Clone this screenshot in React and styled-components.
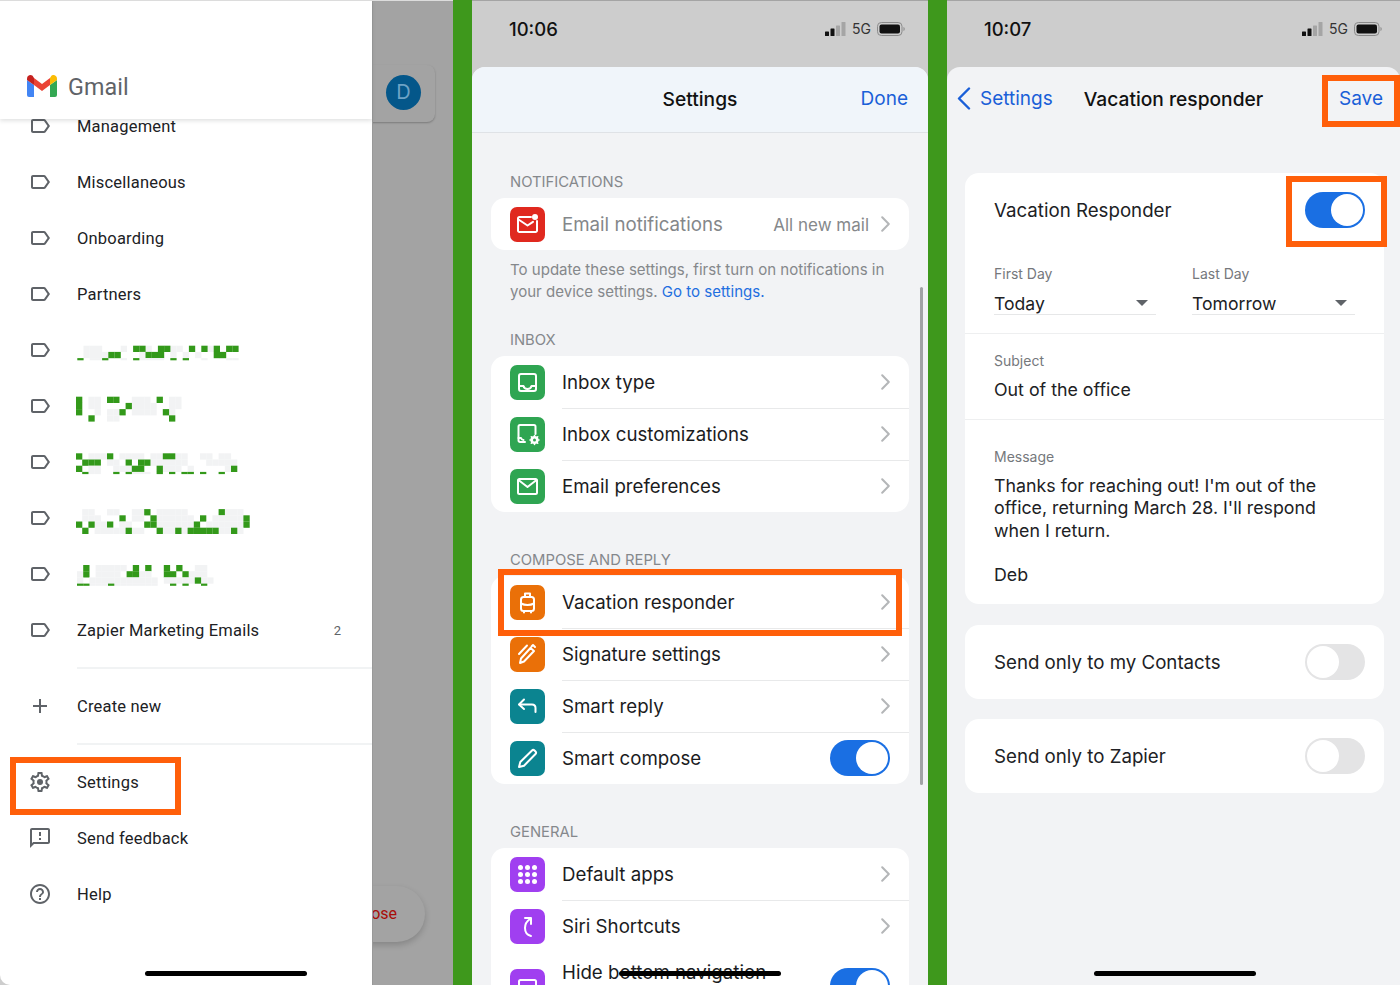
import React from 'react';
import styled, { createGlobalStyle } from 'styled-components';
import { MdOutlineLabel, MdAdd, MdOutlineFeedback, MdHelpOutline } from 'react-icons/md';

const GlobalStyle = createGlobalStyle`
    html, body {
        margin: 0;
        padding: 0;
        height: 985px;
        overflow: hidden;
        background: #3e981c;
    }
    * {
        box-sizing: border-box;
    }
`

const labels = ['Management', 'Miscellaneous', 'Onboarding', 'Partners']

// pixelated labels: each row is [green columns, pale columns], the last row is cut short
const redactions = [
    {
        y: 11.7,
        x: 1.3,
        rows: [
            [[9, 10, 13, 14, 18, 20, 22, 24, 25], [1, 2, 3, 7, 11, 15, 16, 21]],
            [[5, 6, 11, 12, 13, 22, 23], [1, 2, 3, 4, 10, 15, 17, 19]],
            [[0, 4, 9, 15, 17], [2, 3, 7, 10, 11, 12, 13, 20, 24, 25]],
        ],
    },
    {
        y: 6.7,
        x: 0,
        rows: [
            [[0, 5, 6, 13], [2, 3, 9, 10, 11, 15, 16]],
            [[0, 8], [2, 3, 9, 10, 11, 12, 15, 16]],
            [[0, 7, 14], [3, 5, 6, 9, 10, 11, 12, 15]],
            [[2, 15], [5, 6]],
            [[], []],
        ],
    },
    {
        y: 7.3,
        x: 0,
        rows: [
            [[0, 5, 14, 15], [2, 3, 4, 7, 8, 9, 10, 12, 13, 16, 17, 20, 21, 23, 24]],
            [[1, 2, 3, 8, 10, 11], [5, 6, 12, 13, 14, 15, 16, 17, 21, 22, 23, 24, 25]],
            [[0, 9, 10, 13, 25], [2, 3, 6, 7, 8, 14, 15, 16, 18, 24]],
            [[1, 6, 8, 13, 15, 17, 18, 20, 23], [2, 3, 9, 10, 11]],
        ],
    },
    {
        y: 7.1,
        x: 0,
        rows: [
            [[11, 23], [1, 2, 5, 6, 9, 10, 13, 14, 15, 16, 17, 24, 25, 26]],
            [[7, 12, 20, 27], [1, 2, 3, 9, 10, 13, 14, 15, 16, 17, 18, 22, 23, 24, 25, 26]],
            [[0, 2, 5, 11, 12, 19, 27], [3, 4, 7, 8, 13, 14, 15, 16, 17, 18, 21, 22, 23, 24, 25, 26]],
            [[1, 8, 13, 16, 18, 19, 20, 21, 22, 25], [3, 4, 5, 6, 7, 9, 10, 14, 15, 17, 23, 24, 26]],
            [[], [4, 5, 14, 15]],
        ],
    },
    {
        y: 7,
        x: 1,
        rows: [
            [[1, 9, 11, 14, 16], [3, 4, 5, 6, 7, 19, 20]],
            [[1, 8, 9, 14, 15, 17], [0, 3, 4, 5, 6, 10, 11, 18, 19, 20]],
            [[19], [0, 2, 3, 4, 5, 6, 7, 8, 9, 10, 11, 12, 14, 15, 16, 17, 18, 20, 21]],
            [[0, 1, 5, 15, 17, 20], [2, 3, 4, 6, 7, 8, 9, 10, 11, 12]],
        ],
    },
]

const Redaction = ({ y, x, rows }) => {
    const cell = (r, c, color) => (
        <rect
            key={`${r}-${c}-${color}`}
            x={x + c * 6.2}
            y={y + r * 6.2}
            width='6.3'
            height={r === rows.length - 1 ? 2.2 : 6.3}
            fill={color}
        />
    )
    return (
        <svg width='190' height='32' viewBox='0 0 190 32'>
            {rows.map(([green, pale], r) => [
                ...pale.map(c => cell(r, c, '#f2f3f4')),
                ...green.map(c => cell(r, c, '#33991a')),
            ])}
        </svg>
    )
}

const GmailLogo = () => (
    <svg width='30' height='22' viewBox='0 0 30 22'>
        <path fill='#4285f4' d='M2 22h5V10L0 5v15a2 2 0 0 0 2 2z' />
        <path fill='#34a853' d='M23 22h5a2 2 0 0 0 2-2V5l-7 5z' />
        <path fill='#fbbc04' d='M23 3v7l7-5V3.500c0-2.900-3.300-4.600-5.600-2.800z' />
        <path fill='#ea4335' d='M7 10V3l8 6 8-6v7l-8 6z' />
        <path fill='#c5221f' d='M0 5l7 5V3L5.600.7C3.300-1 0 .6 0 3.500z' />
    </svg>
)

const GearIcon = () => (
    <svg width='24' height='24' viewBox='0 0 24 24' fill='#5f6368'>
        <path d='M19.43 12.98c.04-.32.07-.64.07-.98 0-.34-.03-.66-.07-.98l2.11-1.65c.19-.15.24-.42.12-.64l-2-3.46c-.09-.16-.26-.25-.44-.25-.06 0-.12.01-.17.03l-2.49 1c-.52-.4-1.08-.73-1.69-.98l-.38-2.65C14.46 2.18 14.25 2 14 2h-4c-.25 0-.46.18-.49.42l-.38 2.65c-.61.25-1.17.59-1.69.98l-2.49-1c-.06-.02-.12-.03-.18-.03-.17 0-.34.09-.43.25l-2 3.46c-.13.22-.07.49.12.64l2.11 1.65c-.04.32-.07.65-.07.98 0 .33.03.66.07.98l-2.11 1.65c-.19.15-.24.42-.12.64l2 3.46c.09.16.26.25.44.25.06 0 .12-.01.17-.03l2.49-1c.52.4 1.08.73 1.69.98l.38 2.65c.03.24.24.42.49.42h4c.25 0 .46-.18.49-.42l.38-2.65c.61-.25 1.17-.59 1.69-.98l2.49 1c.06.02.12.03.18.03.17 0 .34-.09.43-.25l2-3.46c.12-.22.07-.49-.12-.64l-2.11-1.65zm-1.98-1.71c.04.31.05.52.05.73 0 .21-.02.43-.05.73l-.14 1.13.89.7 1.08.84-.7 1.21-1.27-.51-1.04-.42-.9.68c-.43.32-.84.56-1.25.73l-1.06.43-.16 1.13-.2 1.35h-1.4l-.19-1.35-.16-1.13-1.06-.43c-.43-.18-.83-.41-1.23-.71l-.91-.7-1.06.43-1.27.51-.7-1.21 1.08-.84.89-.7-.14-1.13c-.03-.31-.05-.54-.05-.74s.02-.43.05-.73l.14-1.13-.89-.7-1.08-.84.7-1.21 1.27.51 1.04.42.9-.68c.43-.32.84-.56 1.25-.73l1.06-.43.16-1.13.2-1.35h1.39l.19 1.35.16 1.13 1.06.43c.43.18.83.41 1.23.71l.91.7 1.06-.43 1.27-.51.7 1.21-1.07.85-.89.7.14 1.13z' />
        <circle cx='12' cy='12' r='3' />
    </svg>
)

const Chevron = () => (
    <svg width='9' height='16' viewBox='0 0 9 16' fill='none' stroke='#b4b6b8' strokeWidth='2' strokeLinecap='round' strokeLinejoin='round'>
        <path d='M1.200 1.200L7.800 8l-6.600 6.800' />
    </svg>
)

const tileStroke = {
    fill: 'none',
    stroke: '#fff',
    strokeWidth: 2,
    strokeLinecap: 'round',
    strokeLinejoin: 'round',
}

const tileIcons = {
    notify: (
        <>
            <path {...tileStroke} d='M21 10H9.500A1.500 1.500 0 0 0 8 11.500v12A1.500 1.500 0 0 0 9.500 25h16a1.500 1.500 0 0 0 1.500-1.500V14' />
            <path {...tileStroke} d='M8.500 12.500l9 6 5.500-3.700' />
            <circle cx='25' cy='10' r='3' fill='#fff' />
        </>
    ),
    inbox: (
        <>
            <rect {...tileStroke} x='9' y='9' width='17' height='17' rx='2' />
            <path {...tileStroke} d='M9 21h4.500c.5 2 2 3 4 3s3.500-1 4-3H26' />
        </>
    ),
    custom: (
        <>
            <path {...tileStroke} d='M15 25H10a1.500 1.500 0 0 1-1.500-1.500v-14A1.500 1.500 0 0 1 10 8h14a1.500 1.500 0 0 1 1.500 1.500V17' />
            <path {...tileStroke} d='M8.500 21h2.500c.4 1.400 1.300 2 2.500 2' />
            <circle cx='24.500' cy='23' r='2.800' fill='none' stroke='#fff' strokeWidth='2.600' />
            <path {...tileStroke} strokeWidth='1.600' d='M24.500 18.500v1.200M24.500 26.300v1.200M20 23h1.200M27.800 23H29M21.300 19.800l.9.9M26.800 25.300l.9.9M21.300 26.200l.9-.9M26.800 20.700l.9-.9' />
        </>
    ),
    mail: (
        <>
            <rect {...tileStroke} x='8' y='10' width='19' height='15' rx='1.500' />
            <path {...tileStroke} d='M8.500 11l9 7 9-7' />
        </>
    ),
    luggage: (
        <>
            <rect {...tileStroke} x='11' y='12' width='13' height='14' rx='2.500' />
            <path {...tileStroke} d='M15 12V8.500h5V12M11 18.500c2 1 3.500 1.500 6.500 1.500s4.500-.5 6.500-1.500M14 26.500v1M21 26.500v1' />
        </>
    ),
    pens: (
        <>
            <path {...tileStroke} d='M10 26l1-4.500 9.500-10.500 3.500 3-10 10.500zM17 8.500L9 17M25 10l-2-2-1.500 1.500' />
        </>
    ),
    reply: (
        <>
            <path {...tileStroke} d='M14 10.500L9 15.500l5 4.500' />
            <path {...tileStroke} d='M9.500 15.500H22c2.200 0 3.500 1.500 3.500 3.500v4' />
        </>
    ),
    pencil: (
        <>
            <path {...tileStroke} d='M9 26l1.300-5L22 9.500a1.800 1.800 0 0 1 2.500 0l1 1a1.800 1.800 0 0 1 0 2.500L14 24.700z' />
        </>
    ),
    apps: (
        <g fill='#fff'>
            {[10.500, 17.500, 24.500].map(cy => [10.500, 17.500, 24.500].map(cx => (
                <circle key={`${cx}-${cy}`} cx={cx} cy={cy} r='2.500' />
            )))}
        </g>
    ),
    siri: (
        <>
            <path {...tileStroke} d='M21 27c-4-1-6-4-6-8s2-7 5-9' />
            <path {...tileStroke} d='M15 9h6v6' />
        </>
    ),
    hide: (
        <>
            <rect {...tileStroke} x='9' y='11' width='17' height='17' rx='1.500' />
            <path {...tileStroke} d='M9 23h17' />
        </>
    ),
}

const TileIcon = ({ name, color }) => (
    <Tile $color={color}>
        <svg width='35' height='35' viewBox='0 0 35 35'>{tileIcons[name]}</svg>
    </Tile>
)

const StatusBar = ({ time, right }) => (
    <Status $right={right}>
        <Clock>{time}</Clock>
        <StatusIcons>
            <svg width='21' height='14' viewBox='0 0 21 14'>
                <rect x='0' y='9.500' width='4' height='4.500' rx='.6' fill='#111' />
                <rect x='5.500' y='6.500' width='4' height='7.500' rx='.6' fill='#111' />
                <rect x='11' y='3.500' width='4' height='10.500' rx='.6' fill='#a5a5a5' />
                <rect x='16.500' y='0' width='4' height='14' rx='.6' fill='#a5a5a5' />
            </svg>
            <Network>5G</Network>
            <svg width='28' height='14' viewBox='0 0 28 14'>
                <rect x='.5' y='.5' width='24.500' height='13' rx='3.800' fill='none' stroke='#8a8a8a' />
                <rect x='2.500' y='2.500' width='20.500' height='9' rx='2' fill='#111' />
                <path d='M26.500 5v4c.8-.4 1.200-1.200 1.200-2s-.4-1.600-1.200-2z' fill='#8a8a8a' />
            </svg>
        </StatusIcons>
    </Status>
)

const Row = ({ icon, color, title, faded, value, on, tall }) => (
    <SettingRow $tall={tall}>
        <TileIcon name={icon} color={color} />
        <RowBody>
            <RowTitle $faded={faded} $tall={tall}>{title}</RowTitle>
            {value && <RowValue>{value}</RowValue>}
            {on ? <Toggle $on /> : <Chevron />}
        </RowBody>
    </SettingRow>
)

const App = () => {
    return (
        <Page>
            <GlobalStyle />

            <Panel $width={453} $row>
                <Drawer>
                    <DrawerHeader>
                        <GmailLogo />
                        <GmailName>Gmail</GmailName>
                    </DrawerHeader>
                    <DrawerList>
                        {labels.map(label => (
                            <DrawerRow key={label}>
                                <DrawerIcon><MdOutlineLabel size={24} /></DrawerIcon>
                                <DrawerText>{label}</DrawerText>
                            </DrawerRow>
                        ))}
                        {redactions.map(r => (
                            <DrawerRow key={r.y}>
                                <DrawerIcon><MdOutlineLabel size={24} /></DrawerIcon>
                                <RedactionSlot><Redaction {...r} /></RedactionSlot>
                            </DrawerRow>
                        ))}
                        <DrawerRow>
                            <DrawerIcon><MdOutlineLabel size={24} /></DrawerIcon>
                            <DrawerText>Zapier Marketing Emails</DrawerText>
                            <DrawerCount>2</DrawerCount>
                        </DrawerRow>
                        <DrawerDivider />
                        <DrawerRow>
                            <DrawerIcon><MdAdd size={24} /></DrawerIcon>
                            <DrawerText>Create new</DrawerText>
                        </DrawerRow>
                        <DrawerDivider />
                        <DrawerRow>
                            <DrawerIcon><GearIcon /></DrawerIcon>
                            <DrawerText>Settings</DrawerText>
                        </DrawerRow>
                        <DrawerRow>
                            <DrawerIcon><MdOutlineFeedback size={24} /></DrawerIcon>
                            <DrawerText>Send feedback</DrawerText>
                        </DrawerRow>
                        <DrawerRow>
                            <DrawerIcon><MdHelpOutline size={24} /></DrawerIcon>
                            <DrawerText>Help</DrawerText>
                        </DrawerRow>
                    </DrawerList>
                </Drawer>
                <Dimmed>
                    <SearchBar>
                        <Avatar>D</Avatar>
                    </SearchBar>
                    <ComposePill>ose</ComposePill>
                </Dimmed>
                <Callout $top={757} $left={10} $width={171} $height={58} />
                <HomeBar $left={145} />
            </Panel>

            <Panel $width={456}>
                <StatusBar time='10:06' right={23} />
                <Sheet>
                    <SheetHeader $tinted>
                        <span />
                        <HeaderTitle>Settings</HeaderTitle>
                        <HeaderAction>Done</HeaderAction>
                    </SheetHeader>
                    <SettingsBody>
                        <SectionLabel $top={39}>Notifications</SectionLabel>
                        <Card>
                            <Row icon='notify' color='#e0291f' title='Email notifications' faded value='All new mail' />
                        </Card>
                        <Footnote>
                            To update these settings, first turn on notifications in<br />
                            your device settings. <FootLink>Go to settings.</FootLink>
                        </Footnote>

                        <SectionLabel $top={27}>Inbox</SectionLabel>
                        <Card>
                            <Row icon='inbox' color='#2fa552' title='Inbox type' />
                            <Row icon='custom' color='#2fa552' title='Inbox customizations' />
                            <Row icon='mail' color='#2fa552' title='Email preferences' />
                        </Card>

                        <SectionLabel $top={38}>Compose and reply</SectionLabel>
                        <Card>
                            <Row icon='luggage' color='#ea7008' title='Vacation responder' />
                            <Row icon='pens' color='#ea7008' title='Signature settings' />
                            <Row icon='reply' color='#0b8490' title='Smart reply' />
                            <Row icon='pencil' color='#0b8490' title='Smart compose' on />
                        </Card>

                        <SectionLabel $top={38}>General</SectionLabel>
                        <Card>
                            <Row icon='apps' color='#a03ff0' title='Default apps' />
                            <Row icon='siri' color='#a03ff0' title='Siri Shortcuts' />
                            <Row icon='hide' color='#a03ff0' title='Hide bottom navigation' on tall />
                        </Card>
                    </SettingsBody>
                    <ScrollThumb />
                </Sheet>
                <Callout $top={569} $left={26} $width={404} $height={67} />
                <HomeBar $left={147} />
            </Panel>

            <Panel $width={453}>
                <StatusBar time='10:07' right={18} />
                <Sheet>
                    <SheetHeader>
                        <BackLink>
                            <svg width='14' height='23' viewBox='0 0 14 23' fill='none' stroke='#1a5fd8' strokeWidth='2.400' strokeLinecap='round' strokeLinejoin='round'>
                                <path d='M12 1.500L2 11.500l10 10' />
                            </svg>
                            <HeaderLink>Settings</HeaderLink>
                        </BackLink>
                        <HeaderTitle>Vacation responder</HeaderTitle>
                        <HeaderAction $right={17}>Save</HeaderAction>
                    </SheetHeader>
                    <ResponderBody>
                        <Card>
                            <SwitchRow>
                                <SwitchTitle>Vacation Responder</SwitchTitle>
                                <Toggle $on />
                            </SwitchRow>
                            <DatesRow>
                                <Field>
                                    <FieldLabel>First Day</FieldLabel>
                                    <SelectValue>Today<Caret /></SelectValue>
                                </Field>
                                <Field>
                                    <FieldLabel>Last Day</FieldLabel>
                                    <SelectValue>Tomorrow<Caret /></SelectValue>
                                </Field>
                            </DatesRow>
                            <SubjectBlock>
                                <FieldLabel>Subject</FieldLabel>
                                <FieldValue>Out of the office</FieldValue>
                            </SubjectBlock>
                            <MessageBlock>
                                <FieldLabel>Message</FieldLabel>
                                <MessageText>
                                    Thanks for reaching out! I'm out of the<br />
                                    office, returning March 28. I'll respond<br />
                                    when I return.<br />
                                    <br />
                                    Deb
                                </MessageText>
                            </MessageBlock>
                        </Card>
                        <Card $top={21}>
                            <SwitchRow>
                                <SwitchTitle>Send only to my Contacts</SwitchTitle>
                                <Toggle />
                            </SwitchRow>
                        </Card>
                        <Card $top={20}>
                            <SwitchRow>
                                <SwitchTitle>Send only to Zapier</SwitchTitle>
                                <Toggle />
                            </SwitchRow>
                        </Card>
                    </ResponderBody>
                </Sheet>
                <Callout $top={75} $left={375} $width={78} $height={52} />
                <Callout $top={176} $left={339} $width={101} $height={71} />
                <HomeBar $left={147} />
            </Panel>
        </Page>
    );
}

export default App;

const Page = styled.div`
    display: flex;
    gap: 19px;
    width: 1400px;
    height: 985px;
    overflow: hidden;
    background: #3e981c;
    font-family: Inter, "Liberation Sans", sans-serif;
`

const Panel = styled.section`
    position: relative;
    display: flex;
    flex-direction: ${props => props.$row ? 'row' : 'column'};
    width: ${props => props.$width}px;
    height: 985px;
    overflow: hidden;
    background: #cdcdcd;
    border-top: 1px solid ${props => props.$row ? '#dcdcdc' : 'rgba(0, 0, 0, 0.2)'};
`

const Callout = styled.div`
    position: absolute;
    top: ${props => props.$top - 1}px;
    left: ${props => props.$left}px;
    width: ${props => props.$width}px;
    height: ${props => props.$height}px;
    border: 6px solid #ff5f0a;
    z-index: 5;
`

const HomeBar = styled.div`
    position: absolute;
    left: ${props => props.$left}px;
    bottom: 9px;
    width: 162px;
    height: 5px;
    border-radius: 3px;
    background: #000;
    z-index: 6;
`

/* left phone: gmail drawer */

const Drawer = styled.div`
    display: flex;
    flex-direction: column;
    flex: none;
    width: 372px;
    height: 100%;
    background: #fff;
    border-bottom-left-radius: 10px;
    font-family: Roboto, "Liberation Sans", sans-serif;
`

const DrawerHeader = styled.header`
    position: relative;
    z-index: 1;
    flex: none;
    display: flex;
    align-items: center;
    gap: 11px;
    height: 118px;
    padding: 52px 0 0 27px;
    background: #fff;
    box-shadow: 0 2px 4px rgba(60, 64, 67, 0.15);
`

const GmailName = styled.span`
    padding-top: 2px;
    font-size: 23.300px;
    color: #5f6368;
    letter-spacing: 0.1px;
`

const DrawerList = styled.div`
    margin-top: -21px;
`

const DrawerRow = styled.div`
    display: flex;
    align-items: center;
    height: 56px;
    padding: 0 31px 0 28px;
`

const DrawerIcon = styled.span`
    display: flex;
    width: 24px;
    margin-right: 25px;
    color: #5f6368;
`

const DrawerText = styled.span`
    flex: 1;
    font-size: 16.500px;
    letter-spacing: 0.2px;
    color: #202124;
`

const DrawerCount = styled.span`
    font-size: 13px;
    color: #5f6368;
`

const RedactionSlot = styled.span`
    display: flex;
    margin-left: -1px;
`

const DrawerDivider = styled.div`
    height: 2px;
    margin: 9px 0 9px 77px;
    background: #f1f3f4;
`

const Dimmed = styled.div`
    position: relative;
    flex: 1;
    overflow: hidden;
    background: #a3a3a3;
    border-left: 1px solid #999;
`

const SearchBar = styled.div`
    position: absolute;
    top: 64px;
    right: 18px;
    width: 120px;
    height: 57px;
    display: flex;
    align-items: center;
    justify-content: flex-end;
    padding: 0 14px 3px 0;
    border-radius: 8px;
    background: #a3a3a3;
    box-shadow: 0 1px 2px rgba(0, 0, 0, 0.25);
`

const Avatar = styled.div`
    display: flex;
    align-items: center;
    justify-content: center;
    width: 35px;
    height: 35px;
    border-radius: 50%;
    background: #04578a;
    color: #6ea3c6;
    font-size: 20px;
`

const ComposePill = styled.div`
    position: absolute;
    top: 885px;
    right: 28px;
    width: 120px;
    height: 56px;
    display: flex;
    align-items: center;
    justify-content: flex-end;
    padding: 0 28px 1px 0;
    border-radius: 28px;
    background: #a3a3a3;
    box-shadow: 0 3px 6px rgba(0, 0, 0, 0.18);
    color: #a80d08;
    font-size: 16px;
    font-family: Roboto, "Liberation Sans", sans-serif;
`

/* phone chrome shared by the two settings screens */

const Status = styled.div`
    flex: none;
    display: flex;
    align-items: center;
    justify-content: space-between;
    height: 66px;
    padding: 0 ${props => props.$right}px 11px 37px;
`

const Clock = styled.span`
    font-size: 18.500px;
    font-weight: 500;
    color: #111;
`

const StatusIcons = styled.div`
    display: flex;
    align-items: center;
    gap: 6px;
`

const Network = styled.span`
    font-size: 14px;
    color: #333;
`

const Sheet = styled.div`
    position: relative;
    flex: 1;
    min-height: 0;
    overflow: hidden;
    display: flex;
    flex-direction: column;
    background: #f2f3f5;
    border-radius: 13px 13px 0 0;
`

const SheetHeader = styled.header`
    flex: none;
    display: grid;
    grid-template-columns: 1fr auto 1fr;
    align-items: center;
    height: 66px;
    padding-bottom: 2px;
    background: ${props => props.$tinted ? '#f0f5fa' : 'transparent'};
    border-bottom: 1px solid ${props => props.$tinted ? '#dfe2e6' : 'transparent'};
`

const HeaderTitle = styled.h1`
    margin: 0;
    font-size: 19.200px;
    font-weight: 500;
    color: #111;
`

const HeaderAction = styled.span`
    justify-self: end;
    padding-right: ${props => props.$right || 20}px;
    font-size: 19px;
    color: #1a5fd8;
`

const HeaderLink = styled.span`
    font-size: 19px;
    color: #1a5fd8;
`

const BackLink = styled.div`
    display: flex;
    align-items: center;
    gap: 9px;
    padding-left: 10px;
`

const SettingsBody = styled.div`
    flex: 1;
    min-height: 0;
    padding: 0 19px;
`

const ScrollThumb = styled.div`
    position: absolute;
    top: 220px;
    right: 5px;
    width: 3px;
    height: 498px;
    border-radius: 2px;
    background: #a1a3a5;
`

const SectionLabel = styled.h2`
    margin: ${props => props.$top}px 0 6px 19px;
    font-size: 14.800px;
    line-height: 20px;
    font-weight: 400;
    text-transform: uppercase;
    color: #85888c;
`

const Card = styled.div`
    margin-top: ${props => props.$top || 0}px;
    overflow: hidden;
    background: #fff;
    border-radius: 14px;
`

const SettingRow = styled.div`
    display: flex;
    align-items: center;
    gap: 17px;
    height: ${props => props.$tall ? 68 : 52}px;
    padding-left: 19px;

    & + & > div:last-child {
        box-shadow: inset 0 1px 0 #e8e9ea;
    }
`

const Tile = styled.span`
    flex: none;
    display: flex;
    width: 35px;
    height: 35px;
    border-radius: 7px;
    background: ${props => props.$color};
`

const RowBody = styled.div`
    flex: 1;
    min-width: 0;
    display: flex;
    align-items: center;
    height: 100%;
    padding-right: 19px;
`

const RowTitle = styled.span`
    flex: 1;
    align-self: ${props => props.$tall ? 'flex-start' : 'auto'};
    margin-top: ${props => props.$tall ? 9 : 2}px;
    white-space: nowrap;
    font-size: 18.700px;
    line-height: 24px;
    color: ${props => props.$faded ? '#84878a' : '#1b1c1e'};
`

const RowValue = styled.span`
    margin: 2px 12px 0 0;
    font-size: 17px;
    color: #85888b;
`

const Toggle = styled.span`
    position: relative;
    flex: none;
    display: block;
    width: 60px;
    height: 36px;
    border-radius: 18px;
    background: ${props => props.$on ? '#1a6fe3' : '#e4e4e5'};

    &::after {
        content: '';
        position: absolute;
        top: 2px;
        left: ${props => props.$on ? '26px' : '2px'};
        width: 32px;
        height: 32px;
        border-radius: 50%;
        background: #fff;
    }
`

const Footnote = styled.p`
    margin: 9px 0 0 19px;
    font-size: 15.050px;
    line-height: 22px;
    color: #85888b;
`

const FootLink = styled.span`
    color: #1f6fe0;
`

/* right phone: vacation responder */

const ResponderBody = styled.div`
    flex: 1;
    min-height: 0;
    padding: 40px 16px 0 18px;
`

const SwitchRow = styled.div`
    display: flex;
    align-items: center;
    justify-content: space-between;
    height: 74px;
    padding: 0 19px 0 29px;
`

const SwitchTitle = styled.span`
    font-size: 18.700px;
    color: #202124;
`

const DatesRow = styled.div`
    display: grid;
    grid-template-columns: 162px 163px;
    gap: 36px;
    padding: 18px 29px 18px;
    border-bottom: 1px solid #eeeff0;
`

const Field = styled.div`
    display: flex;
    flex-direction: column;
`

const FieldLabel = styled.div`
    font-size: 14px;
    line-height: 18px;
    color: #75787c;
`

const SelectValue = styled.div`
    display: flex;
    align-items: center;
    justify-content: space-between;
    height: 24px;
    margin-top: 8px;
    padding: 1px 8px 0 0;
    border-bottom: 1px solid #e6e7e8;
    font-size: 17.600px;
    color: #202124;
`

const Caret = styled.span`
    width: 0;
    height: 0;
    border-left: 6px solid transparent;
    border-right: 6px solid transparent;
    border-top: 6px solid #5f6368;
`

const SubjectBlock = styled.div`
    padding: 18px 29px 17px;
    border-bottom: 1px solid #eeeff0;
`

const FieldValue = styled.div`
    margin-top: 8px;
    font-size: 17.800px;
    line-height: 24px;
    color: #202124;
`

const MessageBlock = styled.div`
    padding: 28px 29px 18px;
`

const MessageText = styled.div`
    margin-top: 9px;
    font-size: 17.800px;
    line-height: 22.300px;
    color: #202124;
    white-space: nowrap;
`
